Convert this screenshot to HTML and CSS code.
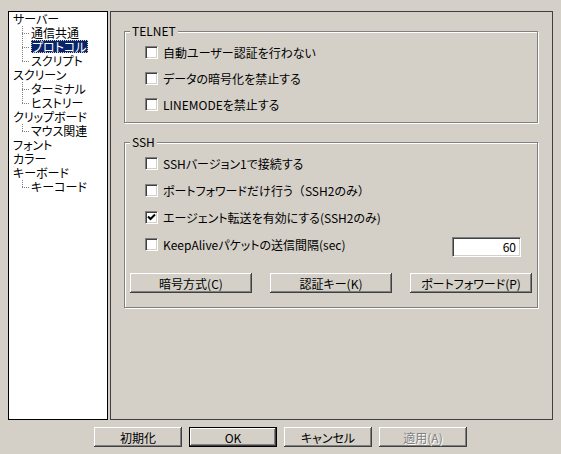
FILE: index.html
```html
<!DOCTYPE html>
<html lang="ja">
<head>
<meta charset="utf-8">
<link rel="stylesheet" href="styles.css">
</head>
<body>
<div class="main">
  <div class="tree">
    <div class="node">サーバー</div>
    <div class="node child">通信共通</div>
    <div class="node child"><span class="sel">プロトコル</span></div>
    <div class="node child last">スクリプト</div>
    <div class="node">スクリーン</div>
    <div class="node child">ターミナル</div>
    <div class="node child last">ヒストリー</div>
    <div class="node">クリップボード</div>
    <div class="node child last">マウス関連</div>
    <div class="node">フォント</div>
    <div class="node">カラー</div>
    <div class="node">キーボード</div>
    <div class="node child last">キーコード</div>
  </div>
  <div class="panel">
    <div class="group telnet">
      <span class="legend">TELNET</span>
      <div class="row"><span class="cb"></span>自動ユーザー認証を行わない</div>
      <div class="row"><span class="cb"></span>データの暗号化を禁止する</div>
      <div class="row"><span class="cb"></span>LINEMODEを禁止する</div>
    </div>
    <div class="group ssh">
      <span class="legend">SSH</span>
      <div class="row"><span class="cb"></span>SSHバージョン1で接続する</div>
      <div class="row"><span class="cb"></span>ポートフォワードだけ行う<span class="fw">（</span>SSH2のみ<span class="fw">）</span></div>
      <div class="row"><span class="cb"><svg width="9" height="9" viewBox="0 0 9 9"><path d="M1 3.5 L3.5 6 L8 1.5" fill="none" stroke="#000" stroke-width="2"/></svg></span>エージェント転送を有効にする(SSH2のみ)</div>
      <div class="row"><span class="cb"></span>KeepAliveパケットの送信間隔(sec)<span class="input">60</span></div>
      <div class="btnrow">
        <span class="btn wide">暗号方式(C)</span>
        <span class="btn wide">認証キー(K)</span>
        <span class="btn wide">ポートフォワード(P)</span>
      </div>
    </div>
  </div>
</div>
<div class="footer">
  <span class="btn">初期化</span>
  <span class="btn default">OK</span>
  <span class="btn">キャンセル</span>
  <span class="btn disabled">適用(A)</span>
</div>
</body>
</html>
```
FILE: styles.css
```css
html, body {
  margin: 0;
  padding: 0;
  background: #d4d0c8;
}
body {
  width: 561px;
  height: 454px;
  overflow: hidden;
  font-family: "Noto Sans CJK JP", sans-serif;
  font-size: 12px;
  font-feature-settings: "palt";
  color: #000;
}
.fw {
  font-feature-settings: normal;
}
.main {
  display: flex;
  gap: 2px;
  padding: 11px 0 0 8px;
}
.tree {
  width: 100px;
  height: 409px;
  box-sizing: border-box;
  border: 1px solid #000;
  background: #fff;
}
.node {
  position: relative;
  height: 14px;
  line-height: 14px;
  padding-left: 4px;
  white-space: nowrap;
}
.node.child {
  padding-left: 22px;
}
.node.child::before {
  content: "";
  position: absolute;
  left: 13px;
  top: 0;
  width: 1px;
  height: 14px;
  background-image: linear-gradient(to bottom, #808080 50%, transparent 50%);
  background-size: 1px 2px;
}
.node.child.last::before {
  height: 8px;
}
.node.child::after {
  content: "";
  position: absolute;
  left: 13px;
  top: 7px;
  width: 8px;
  height: 1px;
  background-image: linear-gradient(to right, #808080 50%, transparent 50%);
  background-size: 2px 1px;
}
.node span {
  display: inline-block;
  padding: 0 1px;
  line-height: 13px;
}
.node .sel {
  background: #0a246a;
  color: #fff;
  outline: 1px dotted #d4d0c8;
  outline-offset: -1px;
}
.panel {
  width: 443px;
  height: 409px;
  box-sizing: border-box;
  border: 1px solid #404040;
  padding: 19px 14px 0 13px;
}
.group {
  position: relative;
  border: 1px solid #808080;
  box-shadow: inset 1px 1px #fff, 1px 1px #fff;
  padding: 7px 0 5px;
}
.group.ssh {
  margin-top: 19px;
  padding-bottom: 14px;
}
.legend {
  position: absolute;
  top: -8px;
  left: 5px;
  padding: 0 2px;
  line-height: 14px;
  background: #d4d0c8;
}
.row {
  display: flex;
  align-items: center;
  height: 26px;
  padding-left: 20px;
  white-space: nowrap;
}
.ssh .row {
  height: 27px;
}
.cb {
  display: inline-flex;
  align-items: center;
  justify-content: center;
  width: 13px;
  height: 13px;
  box-sizing: border-box;
  margin-right: 5px;
  background: #fff;
  border: 1px solid;
  border-color: #808080 #fff #fff #808080;
  box-shadow: inset 1px 1px #404040, inset -1px -1px #d4d0c8;
  flex: none;
}
.input {
  margin-left: auto;
  margin-right: 16px;
  margin-top: 5px;
  width: 69px;
  height: 20px;
  box-sizing: border-box;
  background: #fff;
  border: 1px solid;
  border-color: #808080 #fff #fff #808080;
  box-shadow: inset 1px 1px #404040, inset -1px -1px #d4d0c8;
  text-align: right;
  padding-right: 4px;
  line-height: 18px;
}
.btnrow {
  display: flex;
  justify-content: space-between;
  padding: 0 5px;
  margin-top: 15px;
}
.btn {
  display: flex;
  align-items: center;
  justify-content: center;
  width: 88px;
  height: 20px;
  box-sizing: border-box;
  background: #d4d0c8;
  box-shadow: inset -1px -1px #404040, inset 1px 1px #fff, inset -2px -2px #808080;
  white-space: nowrap;
}
.btn.wide {
  width: 122px;
}
.btn.default {
  border: 1px solid #000;
}
.btn.disabled {
  color: #808080;
  text-shadow: 1px 1px #fff;
}
.footer {
  display: flex;
  gap: 7px;
  padding: 7px 0 0 94px;
}
```
